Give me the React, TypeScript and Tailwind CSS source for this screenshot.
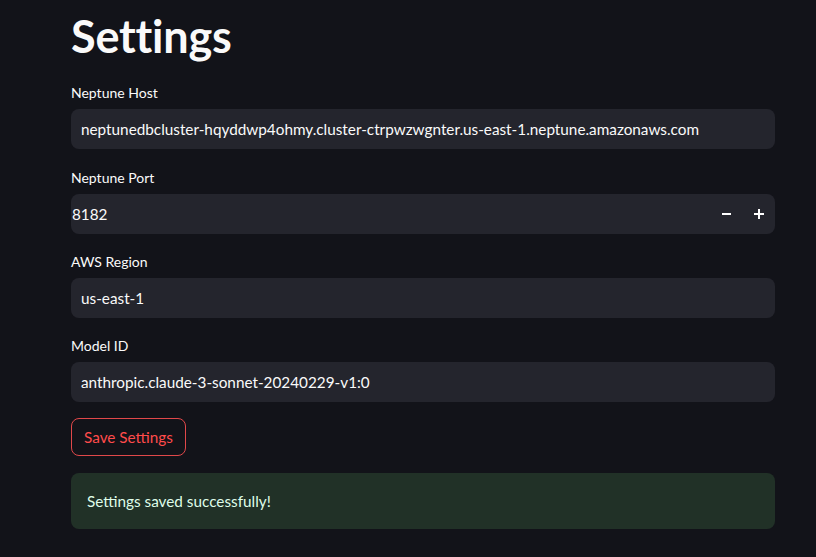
const fields = [
  { label: "Neptune Host", value: "neptunedbcluster-hqyddwp4ohmy.cluster-ctrpwzwgnter.us-east-1.neptune.amazonaws.com" },
  { label: "Neptune Port", value: "8182", number: true },
  { label: "AWS Region", value: "us-east-1" },
  { label: "Model ID", value: "anthropic.claude-3-sonnet-20240229-v1:0" },
];

const App = () => {
  return (
    <div
      className="min-h-[557px] w-full bg-[#121319] text-[#fafafa]"
      style={{ fontFamily: "Lato, 'Noto Sans', sans-serif" }}
    >
      <main className="ml-[71px] w-[704px] pt-[9px]">
        <h1 className="text-[45px] font-bold leading-[54px] tracking-[-0.2px]">Settings</h1>

        <section className="mt-[22px] flex flex-col gap-[20px]">
          {fields.map((f, i) => (
            <div key={f.label} className={`flex flex-col ${i === 1 ? "mt-[1px]" : ""}`}>
              <label className="h-[24px] text-[14px] leading-[16px] text-[#fafafa]">{f.label}</label>
              <div className={`flex h-[40px] items-center rounded-lg bg-[#24252d] ${f.number ? "pl-[1px] pr-[10px]" : "px-[10px]"}`}>
                <span className="flex-1 text-[15.3px] text-[#fafafa]">{f.value}</span>
                {f.number && (
                  <div className="flex items-center gap-[23px] pr-[1px]">
                    <span className="block h-[2px] w-[9px] bg-white" />
                    <span className="relative block h-[10px] w-[10px]">
                      <span className="absolute left-0 top-[4px] h-[2px] w-[10px] bg-white" />
                      <span className="absolute left-[4px] top-0 h-[10px] w-[2px] bg-white" />
                    </span>
                  </div>
                )}
              </div>
            </div>
          ))}
        </section>

        <button className="mt-[16px] h-[38px] rounded-lg border border-[#e0484a] px-[12px] text-[15.3px] text-[#ff4b4b]">
          Save Settings
        </button>

        <div className="mt-[17px] flex h-[56px] items-center rounded-lg bg-[#213127] px-[16px] text-[15.3px] text-[#dffde9]">
          Settings saved successfully!
        </div>
      </main>
    </div>
  );
};

export default App;
